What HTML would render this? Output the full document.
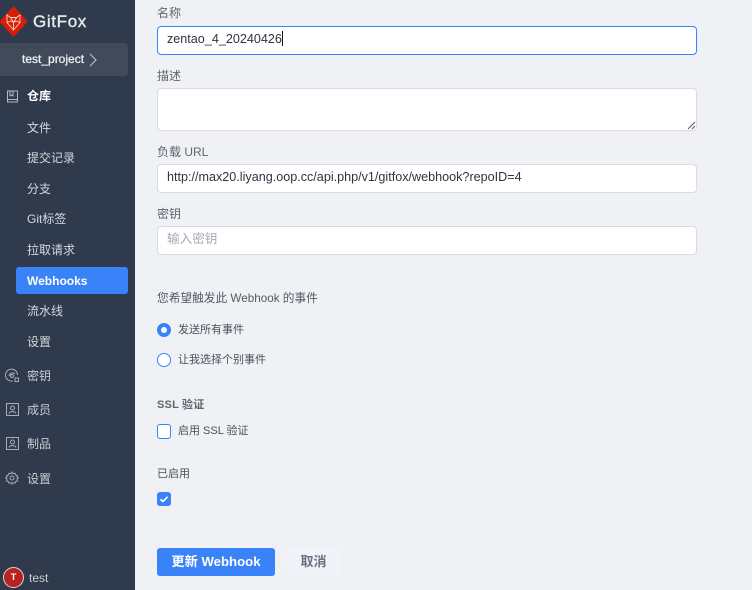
<!DOCTYPE html>
<html><head><meta charset="utf-8"><style>
*{box-sizing:border-box}
html,body{margin:0;padding:0;width:752px;height:590px;overflow:hidden;background:#f0f1f4;font-family:"Liberation Sans","Noto Sans CJK SC",sans-serif}
.a{position:absolute;white-space:nowrap}
#side{position:absolute;left:0;top:0;width:135px;height:590px;background:#2f3a4c}
.n{position:absolute;left:27px;font-size:12px;line-height:16px;color:#d5d8de;white-space:nowrap}
.m{position:absolute;left:27px;font-size:12px;line-height:16px;color:#c9ccd3;white-space:nowrap}
.lb{position:absolute;left:157px;font-size:12px;line-height:16px;color:#5f6470;white-space:nowrap}
.in{position:absolute;left:157px;width:540px;background:#fff;border:1px solid #d8dbe6;border-radius:4px;font-size:12.6px;color:#2f3440;padding-left:9px;white-space:nowrap}
.t{position:absolute;left:178px;font-size:11px;line-height:16px;color:#4a4f5c;white-space:nowrap}
svg{position:absolute;display:block}
</style></head><body>
<div id="side">
<svg style="left:0;top:6px" width="28" height="31" viewBox="0 0 28 31"><path d="M13.500 2 26 15.500 13.500 29 1 15.500Z" fill="#d81e06" stroke="#d81e06" stroke-width="2.500" stroke-linejoin="round"/><path d="M7 9 10.500 11.500H16.500L20 9V16.500L13.500 24 7 16.500ZM10.500 11.500 13.500 16.500 16.500 11.500M7 16.500 11 15 13.500 16.500 16 15 20 16.500M13.500 16.500V24" fill="none" stroke="#f9d5cf" stroke-width=".9"/></svg>
<div class="a" style="left:33px;top:11px;font-size:17px;line-height:22px;color:#e8e9ec;letter-spacing:.65px;-webkit-text-stroke:.4px #e8e9ec">GitFox</div>
<div class="a" style="left:0;top:43px;width:128px;height:33px;background:#414a5b;border-radius:0 4px 4px 0"></div>
<div class="a" style="left:22px;top:51px;font-size:12px;line-height:17px;color:#f0f1f3;-webkit-text-stroke:.3px #f0f1f3">test_project</div>
<svg style="left:88px;top:53px" width="10" height="14" viewBox="0 0 10 14"><path d="M2 1 8 7 2 13" fill="none" stroke="#b8bcc4" stroke-width="1.200"/></svg>
<svg style="left:6px;top:90px" width="13" height="13" viewBox="0 0 13 13" fill="none" stroke="#b5b9c1" stroke-width="1"><path d="M1.500 1H11.500V12H1.500ZM1.500 9.500H11.500M4 1V6L5.500 5 7 6V1"/></svg>
<div class="n" style="top:88px;color:#fff;font-weight:bold">仓库</div>
<div class="n" style="top:120px">文件</div>
<div class="n" style="top:150px">提交记录</div>
<div class="n" style="top:181px">分支</div>
<div class="n" style="top:211px">Git标签</div>
<div class="n" style="top:242px">拉取请求</div>
<div class="a" style="left:16px;top:267px;width:112px;height:27px;background:#3a82f8;border-radius:3px"></div>
<div class="n" style="top:273px;color:#fff;font-weight:bold">Webhooks</div>
<div class="n" style="top:303px">流水线</div>
<div class="n" style="top:334px">设置</div>
<svg style="left:5px;top:368px" width="15" height="15" viewBox="0 0 15 15" fill="none" stroke="#a9adb6" stroke-width="1"><path d="M12.500 7A6 6 0 1 0 7.500 13M4 8A3.500 3.500 0 0 1 10 6"/><circle cx="7" cy="8" r="1.500"/><rect x="10" y="10" width="3.500" height="3.500"/></svg>
<div class="m" style="top:368px">密钥</div>
<svg style="left:6px;top:403px" width="13" height="13" viewBox="0 0 13 13" fill="none" stroke="#a9adb6" stroke-width="1"><rect x=".5" y=".5" width="12" height="12"/><circle cx="6.500" cy="5" r="2"/><path d="M3 10.500C3.500 8 9.500 8 10 10.500"/></svg>
<div class="m" style="top:402px">成员</div>
<svg style="left:6px;top:437px" width="13" height="13" viewBox="0 0 13 13" fill="none" stroke="#a9adb6" stroke-width="1"><rect x=".5" y=".5" width="12" height="12"/><circle cx="6.500" cy="5" r="2"/><path d="M3 10.500C3.500 8 9.500 8 10 10.500"/></svg>
<div class="m" style="top:436px">制品</div>
<svg style="left:5px;top:471px" width="14" height="14" viewBox="0 0 14 14" fill="none" stroke="#a9adb6" stroke-width="1"><circle cx="7" cy="7" r="2"/><path d="M7 1 8 2.700 10 2.200 10.500 4 12.500 4.500 12 6.300 13.300 7 12 8.300 12.500 10 10.500 10.500 10 12.200 8 11.700 7 13 6 11.700 4 12.200 3.500 10.500 1.500 10 2 8.300 .7 7 2 6.300 1.500 4.500 3.500 4 4 2.200 6 2.700Z"/></svg>
<div class="m" style="top:471px">设置</div>
<div class="a" style="left:3px;top:567px;width:21px;height:21px;border-radius:50%;background:#b8231f;border:1px solid #d5d5d8;color:#fff;font-size:9px;line-height:19px;text-align:center;font-weight:bold">T</div>
<div class="a" style="left:29px;top:570px;font-size:12px;line-height:16px;color:#c9ccd3">test</div>
</div>

<div class="lb" style="top:5px">名称</div>
<div class="in" style="top:26px;height:29px;line-height:25px;border:1px solid #3a82f8">zentao_4_20240426<span style="display:inline-block;width:1px;height:15px;background:#111;vertical-align:-3px"></span></div>
<div class="lb" style="top:68px">描述</div>
<div class="in" style="top:88px;height:43px"></div>
<svg style="left:687px;top:121px" width="9" height="9" viewBox="0 0 9 9"><path d="M8 1 1 8M8 5 5 8" stroke="#555" stroke-width="1"/></svg>
<div class="lb" style="top:144px">负载 URL</div>
<div class="in" style="top:164px;height:29px;line-height:25px">http://max20.liyang.oop.cc/api.php/v1/gitfox/webhook?repoID=4</div>
<div class="lb" style="top:206px">密钥</div>
<div class="in" style="top:226px;height:29px;line-height:25px;color:#a5a9b2">输入密钥</div>
<div class="lb" style="top:291px;font-size:11.700px;color:#555a66">您希望触发此 Webhook 的事件</div>

<div class="a" style="left:157px;top:323px;width:14px;height:14px;border-radius:50%;border:4px solid #3a82f8;background:#fff"></div>
<div class="t" style="top:322px">发送所有事件</div>
<div class="a" style="left:157px;top:353px;width:14px;height:14px;border-radius:50%;border:1px solid #3a82f8;background:#fff"></div>
<div class="t" style="top:352px">让我选择个别事件</div>
<div class="a" style="left:157px;top:397px;font-size:11px;line-height:16px;font-weight:bold;color:#5f6470;letter-spacing:.2px">SSL 验证</div>
<div class="a" style="left:157px;top:424px;width:14px;height:15px;border-radius:3px;border:1px solid #3a82f8;background:#fff"></div>
<div class="t" style="top:423px">启用 SSL 验证</div>
<div class="a" style="left:157px;top:466px;font-size:11px;line-height:16px;color:#4a4f5c">已启用</div>
<div class="a" style="left:157px;top:492px;width:14px;height:14px;border-radius:3px;background:#3a82f8"></div>
<svg style="left:157px;top:492px" width="14" height="14" viewBox="0 0 14 14"><path d="M3.500 7.300 6 9.500 10.500 4.800" fill="none" stroke="#fff" stroke-width="1.700"/></svg>

<div class="a" style="left:157px;top:548px;width:118px;height:28px;background:#3a82f8;border-radius:3px;color:#fff;font-size:13.200px;font-weight:bold;line-height:27px;text-align:center">更新 Webhook</div>
<div class="a" style="left:286px;top:548px;width:55px;height:28px;background:#f2f3f9;border-radius:4px;color:#6b7080;font-size:13px;font-weight:bold;line-height:27px;text-align:center">取消</div>
</body></html>
